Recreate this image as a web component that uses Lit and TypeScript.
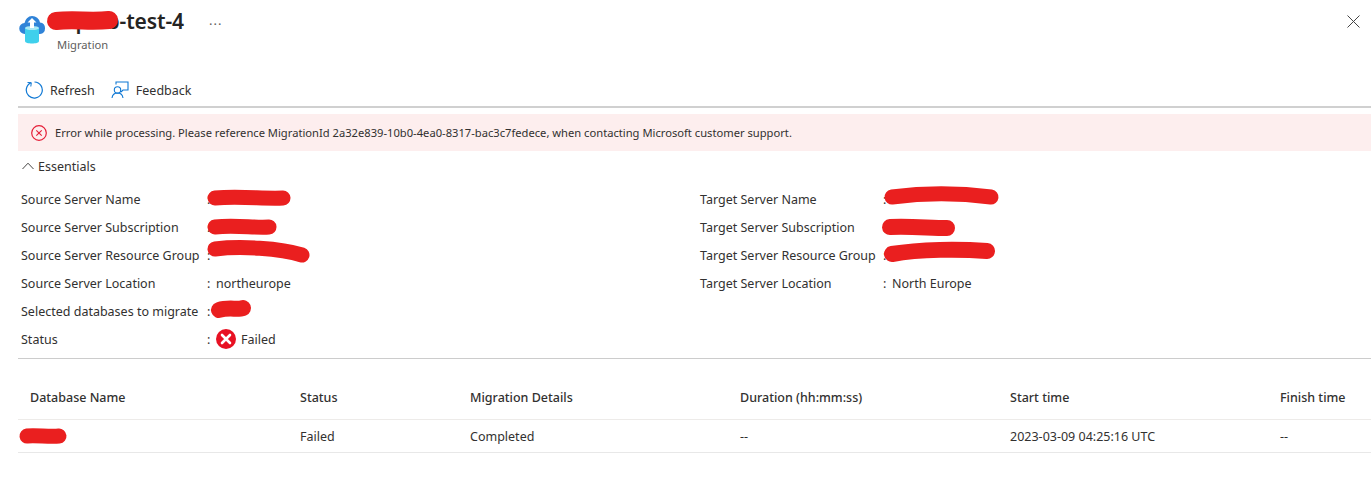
import { LitElement, html, css, svg } from "lit";
import { customElement } from "lit/decorators.js";

const left = [
  ["Source Server Name", "", 0],
  ["Source Server Subscription", "", 0],
  ["Source Server Resource Group", "", 0],
  ["Source Server Location", "northeurope", 0],
  ["Selected databases to migrate", "", 0],
  ["Status", "Failed", 1],
];
const right = [
  ["Target Server Name", "", 0],
  ["Target Server Subscription", "", 0],
  ["Target Server Resource Group", "", 0],
  ["Target Server Location", "North Europe", 0],
];
const cols = ["Database Name", "Status", "Migration Details", "Duration (hh:mm:ss)", "Start time", "Finish time"];
const vals = ["", "Failed", "Completed", "--", "2023-03-09 04:25:16 UTC", "--"];

const strokes: [string, number][] = [
  ["M56 21 C75 19 90 22 109 20", 18],
  ["M215 198 C240 196 265 199 283 198", 15],
  ["M215 227 C235 225 255 228 269 227", 15],
  ["M215 249 C240 246 280 248 302 255", 15],
  ["M219 310 C228 307 238 310 243 308", 16],
  ["M892 197 C930 192 960 193 991 197", 15],
  ["M890 227 C910 226 930 228 947 228", 16],
  ["M892 254 C920 249 960 249 987 251", 16],
  ["M27 436 C35 435 50 437 59 436", 15],
];

@customElement("app-root")
export class AppRoot extends LitElement {
  static styles = css`
    :host {
      display: block;
      position: relative;
      width: 1371px;
      height: 501px;
      overflow: hidden;
      background: #fff;
      font-family: "Noto Sans", "Open Sans", sans-serif;
      font-size: 12.5px;
      color: #323130;
    }
    .head { display: flex; height: 74px; padding-left: 18px; }
    .logo { margin-top: 14px; width: 32px; height: 32px; flex: none; }
    .titles { margin-left: 7px; padding-top: 6px; }
    .title { display: flex; align-items: baseline; }
    h1 { margin: 0; font-size: 21px; font-weight: 600; line-height: 30px; width: 127px; text-align: right; color: #252423; letter-spacing: -0.1px; white-space: nowrap; }
    .sub { font-size: 11.2px; line-height: 14px; color: #605e5c; margin-top: 2px; }
    .more { margin-left: 25px; font-size: 13px; letter-spacing: 1px; color: #605e5c; }
    .close { margin: 15px 11px 0 auto; width: 13px; height: 13px; }
    .bar { display: flex; align-items: center; height: 32px; margin-left: 18px; border-bottom: 2px solid #d0d0d0; padding-left: 7px; }
    .btn { display: flex; align-items: center; gap: 7px; margin-right: 16px; }
    .btn svg { flex: none; }
    .banner { margin: 6px 0 0 18px; height: 37px; background: #fdeeee; display: flex; align-items: center; padding-left: 13px; gap: 8px; font-size: 11.18px; }
    .ess { display: flex; align-items: center; height: 30px; margin-left: 22px; gap: 4px; }
    .grid { display: flex; margin-left: 18px; padding: 4px 0 0 3px; height: 173px; border-bottom: 1px solid #ccc; }
    .col { width: 679px; flex: none; }
    .row { display: flex; height: 28px; align-items: center; white-space: nowrap; }
    .k { width: 186px; flex: none; }
    .col.r .k { width: 183px; }
    .colon { width: 9px; flex: none; }
    .v { display: flex; align-items: center; gap: 5px; }
    table { margin: 16px 0 0 18px; width: 1353px; border-collapse: collapse; table-layout: fixed; }
    th { font-weight: 500; text-align: left; height: 44px; padding: 0 0 0 12px; border-bottom: 1px solid #edebe9; color: #323130; }
    td { height: 32px; padding: 0 0 0 12px; border-bottom: 1px solid #e8e8e8; }
    .overlay { position: absolute; left: 0; top: 0; pointer-events: none; }
  `;

  private row(r: (string | number)[]) {
    return html`<div class="row">
      <div class="k">${r[0]}</div>
      <div class="colon">:</div>
      <div class="v">
        ${r[2]
          ? html`<svg width="20" height="20" viewBox="0 0 20 20"><circle cx="10" cy="10" r="10" fill="#e81123"/><path d="M6 6l8 8M14 6l-8 8" stroke="#fff" stroke-width="2.6" stroke-linecap="round"/></svg>`
          : ""}
        ${r[1]}
      </div>
    </div>`;
  }

  render() {
    return html`
      <div class="head">
        <svg class="logo" viewBox="0 0 32 32">
          <path d="M6 20a5.500 5.500 0 0 1-.5-11A8 8 0 0 1 13 2a8 8 0 0 1 8 6.500A5.800 5.800 0 0 1 21 20z" transform="translate(1 0)" fill="#2f83d8"/>
          <path d="M7 14h14v13c0 1.800-3.200 2.500-7 2.500S7 28.800 7 27z" fill="#3fd0ec"/>
          <ellipse cx="14" cy="14" rx="7" ry="2" fill="#a9e8f5"/>
          <path d="M14 4l-4.500 4.500H12V14h4V8.500h2.500z" fill="#fff"/>
        </svg>
        <div class="titles">
          <div class="title"><h1>splab-test-4</h1><span class="more">···</span></div>
          <div class="sub">Migration</div>
        </div>
        <svg class="close" viewBox="0 0 13 13"><path d="M.5.500l12 12M12.500.500l-12 12" stroke="#444" fill="none"/></svg>
      </div>
      <div class="bar">
        <div class="btn">
          <svg width="18" height="18" viewBox="0 0 18 18"><path d="M6 1.700A8 8 0 1 0 9.500 1" fill="none" stroke="#0f78d4" stroke-width="1.200"/><path d="M2.500 1.500L6.300 1.700 5.800 5.500" fill="none" stroke="#0f78d4" stroke-width="1"/></svg>
          Refresh
        </div>
        <div class="btn">
          <svg width="18" height="18" viewBox="0 0 18 18" fill="none" stroke="#0f78d4" stroke-width="1.100"><circle cx="6.500" cy="9" r="3.200"/><path d="M1 17c.5-3.500 2.500-5 5.500-5s5 1.500 5.500 5"/><path d="M5 3.500V1h12v8h-5l-2 2"/></svg>
          Feedback
        </div>
      </div>
      <div class="banner">
        <svg width="16" height="16" viewBox="0 0 16 16"><circle cx="8" cy="8" r="7.300" fill="none" stroke="#e51e37" stroke-width="1.200"/><path d="M5.300 5.300l5.400 5.400M10.700 5.300l-5.400 5.400" stroke="#e51e37" stroke-width="1.100"/></svg>
        Error while processing. Please reference MigrationId 2a32e839-10b0-4ea0-8317-bac3c7fedece, when contacting Microsoft customer support.
      </div>
      <div class="ess">
        <svg width="12" height="8" viewBox="0 0 12 8"><path d="M.5 7L6 1.200 11.500 7" fill="none" stroke="#323130" stroke-width=".9"/></svg>
        Essentials
      </div>
      <div class="grid">
        <div class="col">${left.map((r) => this.row(r))}</div>
        <div class="col r">${right.map((r) => this.row(r))}</div>
      </div>
      <table>
        <colgroup><col style="width:270px"/><col style="width:170px"/><col style="width:270px"/><col style="width:270px"/><col style="width:270px"/><col style="width:103px"/></colgroup>
        <thead><tr>${cols.map((c) => html`<th>${c}</th>`)}</tr></thead>
        <tbody><tr>${vals.map((v) => html`<td>${v}</td>`)}</tr></tbody>
      </table>
      <svg class="overlay" width="1371" height="501" fill="none" stroke="#ea1f1f" stroke-linecap="round">
        ${strokes.map(([d, w]) => svg`<path d=${d} stroke-width=${w}/>`)}
      </svg>
    `;
  }
}
